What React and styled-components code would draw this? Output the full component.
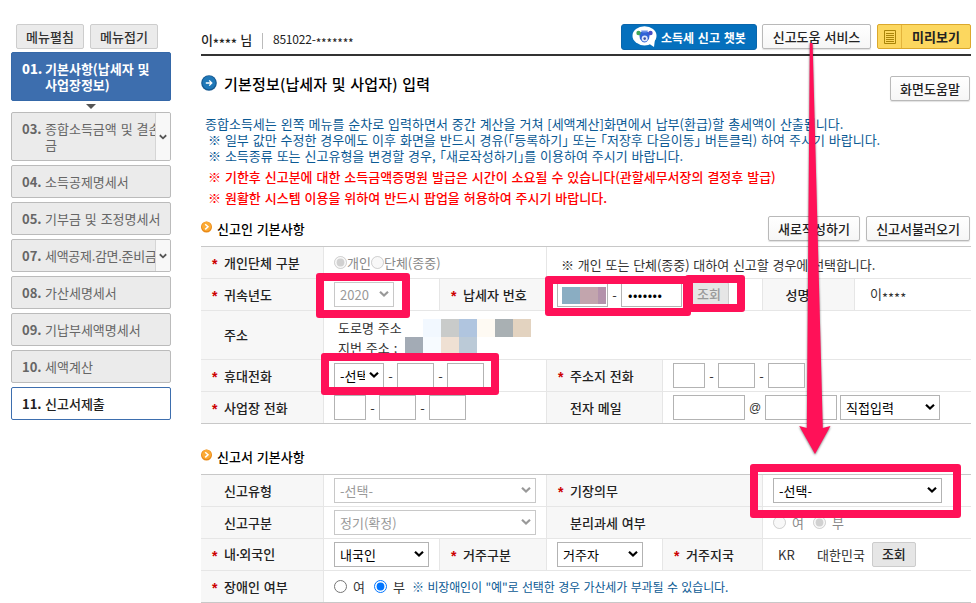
import React, { useState } from "react";
import styled, { createGlobalStyle, css } from "styled-components";

const menus = [
    { no: "03.", lines: ["종합소득금액 및 결손", "금"], toggle: true },
    { no: "04.", lines: ["소득공제명세서"] },
    { no: "05.", lines: ["기부금 및 조정명세서"] },
    { no: "07.", lines: ["세액공제.감면.준비금"], toggle: true, tight: true },
    { no: "08.", lines: ["가산세명세서"] },
    { no: "09.", lines: ["기납부세액명세서"] },
    { no: "10.", lines: ["세액계산"] },
];

const Chevron = ({ className }) => (
    <svg className={className} width="10" height="8" viewBox="0 0 10 8">
        <path d="M1 1.8 L5 5.6 L9 1.8" fill="none" stroke="currentColor" strokeWidth="2.2" />
    </svg>
);

const SelectBox = ({ w, disabled, pad, children }) => (
    <SelectWrap $w={w} $disabled={disabled}>
        <Select disabled={disabled} $pad={pad}>
            <option>{children}</option>
        </Select>
        <SelectArrow />
    </SelectWrap>
);

const Phone = ({ first }) => (
    <>
        {first || <Input $w={32} />}
        <Dash>-</Dash>
        <Input $w={37} />
        <Dash>-</Dash>
        <Input $w={37} />
    </>
);

const Th = ({ w, required, center, children }) => (
    <Label $w={w} $center={center}>
        {!center && <Star>{required ? "*" : ""}</Star>}
        <span>{children}</span>
    </Label>
);

const SectionTitle = ({ children }) => (
    <SectionName>
        <svg width="11" height="12" viewBox="0 0 11 12">
            <circle cx="5.5" cy="6" r="5.5" fill="#e98a17" />
            <circle cx="5.5" cy="5.4" r="4.6" fill="#fbaa35" />
            <path d="M4.2 3.2 L7 5.8 L4.2 8.4" fill="none" stroke="#fff" strokeWidth="1.5" />
        </svg>
        {children}
    </SectionName>
);

const App = () => {
    const [disabledYn, setDisabledYn] = useState("N");

    return (
        <>
            <GlobalStyle />
            <Page>
                <Side>
                    <SideTop>
                        <SideButton>메뉴펼침</SideButton>
                        <SideButton>메뉴접기</SideButton>
                    </SideTop>
                    <MenuItem $active>
                        <MenuNo>01.</MenuNo>
                        <MenuText>
                            <div>기본사항(납세자 및</div>
                            <div>사업장정보)</div>
                        </MenuText>
                    </MenuItem>
                    <Pointer />
                    <MenuList>
                        {menus.map((m) => (
                            <MenuItem key={m.no}>
                                <MenuNo>{m.no}</MenuNo>
                                <MenuText $tight={m.tight}>
                                    {m.lines.map((line) => <div key={line}>{line}</div>)}
                                </MenuText>
                                {m.toggle && <Toggle><Chevron /></Toggle>}
                            </MenuItem>
                        ))}
                        <MenuItem $last>
                            <MenuNo>11.</MenuNo>
                            <MenuText>신고서제출</MenuText>
                        </MenuItem>
                    </MenuList>
                </Side>

                <Main>
                    <Header>
                        <User>
                            <UserName>이<Hidden>****</Hidden> 님</UserName>
                            <UserNo>851022-<Hidden>*******</Hidden></UserNo>
                        </User>
                        <ChatBot>
                            <svg width="26" height="22" viewBox="0 0 26 22">
                                <ellipse cx="12.5" cy="9.8" rx="12" ry="9.6" fill="#fff" />
                                <path d="M16 17 L22 21 L23 13 Z" fill="#fff" />
                                <path d="M7 7 Q12.5 3 18 7 L17 13 Q12.5 20 8 13 Z" fill="#2f62d6" />
                                <path d="M9 4.5 L16 4.5 L14.5 6.5 L10.5 6.5 Z" fill="#6b8fe8" />
                                <circle cx="6.5" cy="7" r="2.2" fill="#3ea557" />
                                <circle cx="18.5" cy="7" r="2.2" fill="#4a4fc4" />
                                <circle cx="12.7" cy="12.6" r="3" fill="#dfe8fb" />
                                <circle cx="12.7" cy="12.6" r="1.3" fill="#3a4fa0" />
                            </svg>
                            소득세 신고 챗봇
                        </ChatBot>
                        <Button $w={109}>신고도움 서비스</Button>
                        <Preview>
                            <PreviewIcon>
                                <svg width="12" height="14" viewBox="0 0 12 14">
                                    <path d="M.5 .5 H11.5 V13.5 H.5 Z M2 3.5 H10 M2 5.5 H10 M2 7.5 H10 M2 9.5 H10 M2 11.5 H10" fill="none" stroke="#a98408" />
                                </svg>
                            </PreviewIcon>
                            미리보기
                        </Preview>
                    </Header>

                    <TitleBar>
                        <svg width="16" height="16" viewBox="0 0 16 16">
                            <circle cx="8" cy="8" r="7.8" fill="#175a92" />
                            <circle cx="8" cy="7.7" r="6.6" fill="#1f78b8" />
                            <path d="M4.8 8 H10.6 M8.2 5.4 L10.8 8 L8.2 10.6" fill="none" stroke="#fff" strokeWidth="1.3" />
                        </svg>
                        <Title>기본정보(납세자 및 사업자) 입력</Title>
                        <Button $w={80}>화면도움말</Button>
                    </TitleBar>

                    <Notes>
                        <p>종합소득세는 왼쪽 메뉴를 순차로 입력하면서 중간 계산을 거쳐 [세액계산]화면에서 납부(환급)할 총세액이 산출됩니다.</p>
                        <Sub>※ 일부 값만 수정한 경우에도 이후 화면을 반드시 경유(｢등록하기｣ 또는 ｢저장후 다음이동｣ 버튼클릭) 하여 주시기 바랍니다.</Sub>
                        <Sub>※ 소득종류 또는 신고유형을 변경할 경우, ｢새로작성하기｣를 이용하여 주시기 바랍니다.</Sub>
                        <Warn>※ 기한후 신고분에 대한 소득금액증명원 발급은 시간이 소요될 수 있습니다(관할세무서장의 결정후 발급)</Warn>
                        <Warn>※ 원활한 시스템 이용을 위하여 반드시 팝업을 허용하여 주시기 바랍니다.</Warn>
                    </Notes>

                    <SectionHead $top={10}>
                        <SectionTitle>신고인 기본사항</SectionTitle>
                        <Button $w={92}>새로작성하기</Button>
                        <Button $w={104}>신고서불러오기</Button>
                    </SectionHead>
                    <Table>
                        <Row>
                            <Th w={123} required>개인단체 구분</Th>
                            <Cell $w={223}>
                                <Muted>
                                    <Radio type="radio" name="kind" disabled defaultChecked />개인
                                    <Radio type="radio" name="kind" disabled />단체(종중)
                                </Muted>
                            </Cell>
                            <Cell>
                                <Guide>※ 개인 또는 단체(종중) 대하여 신고할 경우에 선택합니다.</Guide>
                            </Cell>
                        </Row>
                        <Row>
                            <Th w={123} required>귀속년도</Th>
                            <Cell $w={116}><SelectBox w={60} disabled>2020</SelectBox></Cell>
                            <Th w={107} required>납세자 번호</Th>
                            <Cell $w={216}>
                                <MaskedInput><i /><i /><i /></MaskedInput>
                                <Dash>-</Dash>
                                <Input $w={61} type="password" defaultValue="0000000" />
                                <Lookup $w={40} $muted>조회</Lookup>
                            </Cell>
                            <Th w={92} center>성명</Th>
                            <Cell><Plain $left={5}>이<Hidden>****</Hidden></Plain></Cell>
                        </Row>
                        <Row $h={49}>
                            <Th w={123}>주소</Th>
                            <Cell>
                                <Address>
                                    <AddressLine>
                                        <AddressName $w={85} $top={1}>도로명 주소</AddressName>
                                        <Tile $c="#f2f8ff" /><Tile $c="#c9cbca" /><Tile $c="#b0c5df" />
                                        <Tile $c="#fefaf3" /><Tile $c="#a9b0b3" /><Tile $c="#e3d3c0" />
                                    </AddressLine>
                                    <AddressLine>
                                        <AddressName $w={67} $top={3}>지번 주소 :</AddressName>
                                        <Tile $c="#a3abb5" /><Tile $c="#f7fbff" /><Tile $c="#efe0d3" /><Tile $c="#bbcad7" />
                                    </AddressLine>
                                </Address>
                            </Cell>
                        </Row>
                        <Row>
                            <Th w={123} required>휴대전화</Th>
                            <Cell $w={223}><Phone first={<SelectBox w={50} pad={18}>-선택-</SelectBox>} /></Cell>
                            <Th w={116} required>주소지 전화</Th>
                            <Cell><Phone /></Cell>
                        </Row>
                        <Row>
                            <Th w={123} required>사업장 전화</Th>
                            <Cell $w={223}><Phone /></Cell>
                            <Th w={116}>전자 메일</Th>
                            <Cell>
                                <Input $w={72} />
                                <At>@</At>
                                <Input $w={72} />
                                <Gap />
                                <SelectBox w={100}>직접입력</SelectBox>
                            </Cell>
                        </Row>
                    </Table>

                    <SectionHead $top={20}>
                        <SectionTitle>신고서 기본사항</SectionTitle>
                    </SectionHead>
                    <Table>
                        <Row>
                            <Th w={123}>신고유형</Th>
                            <Cell $w={223}><SelectBox w={202} disabled>-선택-</SelectBox></Cell>
                            <Th w={216} required>기장의무</Th>
                            <Cell><SelectBox w={169}>-선택-</SelectBox></Cell>
                        </Row>
                        <Row>
                            <Th w={123}>신고구분</Th>
                            <Cell $w={223}><SelectBox w={202} disabled>정기(확정)</SelectBox></Cell>
                            <Th w={216}>분리과세 여부</Th>
                            <Cell>
                                <Muted $spaced>
                                    <Radio type="radio" name="split" disabled /><em>여</em>
                                    <Radio type="radio" name="split" disabled defaultChecked /><em>부</em>
                                </Muted>
                            </Cell>
                        </Row>
                        <Row>
                            <Th w={123} required>내<Dot>·</Dot>외국인</Th>
                            <Cell $w={116}><SelectBox w={95}>내국인</SelectBox></Cell>
                            <Th w={107} required>거주구분</Th>
                            <Cell $w={116}><SelectBox w={86}>거주자</SelectBox></Cell>
                            <Th w={100} required>거주지국</Th>
                            <Cell>
                                <Country>KR</Country>
                                <Plain>대한민국</Plain>
                                <Lookup $w={44}>조회</Lookup>
                            </Cell>
                        </Row>
                        <Row>
                            <Th w={123} required>장애인 여부</Th>
                            <Cell>
                                <Choice>
                                    <Radio type="radio" name="dis" checked={disabledYn === "Y"} onChange={() => setDisabledYn("Y")} /><em>여</em>
                                    <Radio type="radio" name="dis" checked={disabledYn === "N"} onChange={() => setDisabledYn("N")} /><em>부</em>
                                </Choice>
                                <Tip>※ 비장애인이 "예"로 선택한 경우 가산세가 부과될 수 있습니다.</Tip>
                            </Cell>
                        </Row>
                    </Table>
                </Main>

                {/* 강조 표시 */}
                <Mark $x={316} $y={273} $w={94} $h={45} />
                <Mark $x={545} $y={276} $w={146} $h={40} />
                <Mark $x={685} $y={275} $w={60} $h={37} />
                <Mark $x={321} $y={353} $w={178} $h={42} />
                <Mark $x={750} $y={464} $w={211} $h={54} />
                <Arrow width="60" height="430" viewBox="785 35 60 430">
                    <path d="M809.8 43 H812.6 L822.8 428 L830.5 426 L815 454 L799.2 426 L806.8 428 Z" fill="#ff1158" />
                </Arrow>
            </Page>
        </>
    );
};

export default App;

const GlobalStyle = createGlobalStyle`
    * {
        box-sizing: border-box;
    }
    body {
        margin: 0;
        background: #fff;
    }
    body, button, input, select {
        font-family: "Noto Sans CJK KR", sans-serif;
        font-size: 13px;
        word-spacing: 1px;
    }
    p {
        margin: 0;
    }
    em {
        font-style: normal;
    }
`

const Page = styled.div`
    position: relative;
    width: 976px;
    height: 603px;
    overflow: hidden;
    display: flex;
    gap: 30px;
    padding: 24px 5px 0 11px;
    color: #333;
    line-height: 16px;
    white-space: nowrap;
`

const Side = styled.div`
    width: 160px;
    flex: none;
`

const SideTop = styled.div`
    display: flex;
    gap: 6px;
    padding-left: 5px;
    margin-bottom: 3px;
`

const SideButton = styled.button`
    width: 68px;
    height: 25px;
    padding: 0;
    border: 1px solid #cdcdcd;
    border-radius: 2px;
    background: #ebebeb;
    color: #333;
    line-height: 22px;
    font-weight: 500;
`

const MenuList = styled.div`
    display: flex;
    flex-direction: column;
    gap: 4px;
`

const MenuItem = styled.div`
    position: relative;
    display: flex;
    overflow: hidden;
    padding: 8px 0 7px 10px;
    border: 1px solid #bbb;
    border-radius: 2px;
    background: #ebebeb;
    color: #666;

    ${(p) => p.$active && css`
        border-color: #3568a8;
        background: #3d6eae;
        color: #fff;
        font-weight: bold;
    `}
    ${(p) => p.$last && css`
        border-color: #3d6eae;
        background: #fff;
        color: #222;
        font-weight: 500;
    `}
`

const MenuNo = styled.b`
    width: 23px;
    flex: none;
`

const MenuText = styled.div`
    flex: 1;
    letter-spacing: ${(p) => (p.$tight ? "-0.3px" : "normal")};
`

const Toggle = styled.div`
    position: absolute;
    top: 0;
    right: 0;
    bottom: 0;
    width: 15px;
    display: flex;
    justify-content: center;
    align-items: center;
    border-left: 1px solid #d5d5d5;
    background: #f8f8f8;
    color: #555;

    svg {
        width: 8px;
    }
`

const Pointer = styled.div`
    width: 0;
    margin: 3px auto 3px;
    border: 5px solid transparent;
    border-top-color: #555;
    border-bottom: 0;
`

const Main = styled.div`
    width: 770px;
    flex: none;
`

const Header = styled.div`
    height: 32px;
    display: flex;
    align-items: flex-start;
    border-bottom: 2px solid #333;
`

const User = styled.div`
    flex: 1;
    display: flex;
    align-items: center;
    height: 33px;
`

const UserName = styled.div`
    color: #222;
    font-weight: 500;
    letter-spacing: -0.3px;
    padding-right: 10px;
`

const UserNo = styled.div`
    line-height: 12px;
    border-left: 1px solid #bbb;
    padding-left: 10px;
    font-size: 12px;
    letter-spacing: -0.2px;
    color: #222;
`

/* 별표가 글자 중간 높이에 오도록 내린다 */
const Hidden = styled.span`
    display: inline-block;
    height: 12px;
    line-height: 12px;
    vertical-align: -4px;
`

const Button = styled.button`
    width: ${(p) => p.$w}px;
    height: 25px;
    padding: 0;
    border: 1px solid #b9b9b9;
    border-radius: 2px;
    background: linear-gradient(#fff, #f6f6f6);
    box-shadow: 0 1px 1px rgba(0, 0, 0, 0.12);
    color: #222;
    font-weight: 500;
    line-height: 23px;
`

const ChatBot = styled.button`
    width: 136px;
    height: 26px;
    margin-right: 5px;
    padding: 0 0 0 10px;
    display: flex;
    align-items: center;
    gap: 3px;
    border: 1px solid #0a66ac;
    border-radius: 3px;
    background: #0570bd;
    color: #fff;
    font-size: 12px;
    font-weight: bold;
    word-spacing: 1px;
`

const Preview = styled.button`
    width: 94px;
    height: 25px;
    margin-left: 6px;
    padding: 0;
    display: flex;
    align-items: center;
    gap: 10px;
    border: 1px solid #dba82c;
    border-radius: 2px;
    background: #fcd75f;
    color: #222;
    font-weight: bold;
`

const PreviewIcon = styled.span`
    width: 24px;
    height: 23px;
    display: flex;
    align-items: center;
    justify-content: center;
    border-right: 1px solid #e3b43c;
`

const TitleBar = styled.div`
    display: flex;
    align-items: flex-start;
    height: 25px;
    margin-top: 20px;
    padding-right: 1px;

    svg {
        margin-top: -1px;
    }
`

const Title = styled.div`
    flex: 1;
    padding-left: 7px;
    font-size: 15px;
    font-weight: 500;
    letter-spacing: 0.17px;
    color: #000;
`

const Notes = styled.div`
    margin-top: 15px;
    padding-left: 4px;
    color: #0b5a94;
`

const Sub = styled.p`
    padding-left: 3px;
`

const Warn = styled.p`
    padding-left: 3px;
    margin-top: 5px;
    color: #f00;
    font-weight: 500;
`

const SectionHead = styled.div`
    display: flex;
    align-items: center;
    gap: 6px;
    height: 25px;
    margin: ${(p) => p.$top}px 1px 5px 0;
`

const SectionName = styled.div`
    flex: 1;
    display: flex;
    gap: 5px;
    color: #000;
    font-weight: 500;
`

const Table = styled.div`
    border-top: 1px solid #c8c8c8;
    border-bottom: 1px solid #c8c8c8;
`

const Row = styled.div`
    display: flex;
    height: ${(p) => p.$h || 32}px;
    border-bottom: 1px solid #e6e6e6;

    &:last-child {
        height: 31px;
        border-bottom: 0;
    }
`

const Label = styled.div`
    width: ${(p) => p.$w}px;
    flex: none;
    display: flex;
    align-items: center;
    justify-content: ${(p) => (p.$center ? "center" : "flex-start")};
    padding-right: ${(p) => (p.$center ? 22 : 0)}px;
    border-right: 1px solid #e6e6e6;
    background: #f7f7f7;
    color: #222;
    font-weight: 500;
`

const Star = styled.span`
    width: 23px;
    height: 14px;
    padding-left: 11px;
    color: #c00;
    font: bold 14px "Liberation Sans", sans-serif;
`

const Dot = styled.span`
    font-family: "Liberation Sans", sans-serif;
    font-weight: bold;
    margin-right: -1px;
`

const Cell = styled.div`
    width: ${(p) => (p.$w ? p.$w + "px" : "auto")};
    flex: ${(p) => (p.$w ? "none" : 1)};
    display: flex;
    align-items: center;
    padding-left: 10px;
    border-right: ${(p) => (p.$w ? "1px solid #e6e6e6" : "0")};
`

const Input = styled.input`
    width: ${(p) => p.$w}px;
    height: 25px;
    padding: 0 6px;
    border: 1px solid #b3b3b3;
    background: #fff;
    letter-spacing: 0.5px;
`

const MaskedInput = styled.div`
    width: 51px;
    height: 25px;
    display: flex;
    padding: 4px 1px 2px 4px;
    border: 1px solid #b3b3b3;

    i {
        width: 18px;
        background: #8aadc2;
    }
    i + i {
        background: #c2a5ad;
    }
    i + i + i {
        width: 8px;
        background: #b392ab;
    }
`

const Dash = styled.span`
    width: 13px;
    text-align: center;
`

const At = styled.span`
    width: 20px;
    text-align: center;
    font-size: 12px;
    font-family: "Liberation Sans", sans-serif;
`

const Gap = styled.span`
    width: 3px;
`

const SelectWrap = styled.div`
    position: relative;
    width: ${(p) => p.$w}px;
    height: 25px;
    color: ${(p) => (p.$disabled ? "#999" : "#000")};
`

const Select = styled.select`
    appearance: none;
    width: 100%;
    height: 25px;
    padding: 0 ${(p) => p.$pad || 14}px 1px 5px;
    border: 1px solid ${(p) => (p.disabled ? "#c8c8c8" : "#b3b3b3")};
    border-radius: 0;
    background: #fff;
    color: inherit;
    opacity: 1;
`

const SelectArrow = styled(Chevron)`
    position: absolute;
    right: 5px;
    top: 8px;
    pointer-events: none;
`

const Radio = styled.input`
    width: 13px;
    height: 13px;
    margin: 0;
`

const Muted = styled.div`
    display: flex;
    align-items: center;
    color: #888;

    em {
        width: ${(p) => (p.$spaced ? "27px" : "auto")};
        padding-left: 6px;
    }
`

const Choice = styled.div`
    display: flex;
    align-items: center;

    em {
        width: 27px;
        padding-left: 6px;
    }
`

const Guide = styled.div`
    padding: 4px 0 0 4px;
    letter-spacing: -0.05px;
`

const Plain = styled.div`
    padding-left: ${(p) => p.$left || 0}px;
`

const Country = styled.div`
    width: 44px;
    padding-left: 5px;
`

const Lookup = styled.button`
    width: ${(p) => p.$w}px;
    height: 25px;
    margin-left: 7px;
    padding: 0 0 2px;
    border: 1px solid #ccc;
    border-radius: 2px;
    background: #e6e6e6;
    color: ${(p) => (p.$muted ? "#999" : "#222")};
    font-weight: 500;
`

const Address = styled.div`
    padding: 2px 0 0 4px;
`

const AddressLine = styled.div`
    display: flex;
    height: 18px;

    & + & {
        height: 17px;
    }
`

const AddressName = styled.div`
    width: ${(p) => p.$w}px;
    padding-top: ${(p) => p.$top}px;
`

const Tile = styled.i`
    width: 18px;
    background: ${(p) => p.$c};
`

const Tip = styled.div`
    margin-left: -2px;
    font-size: 12px;
    letter-spacing: -0.14px;
    color: #0b5a94;
`

const Mark = styled.div`
    position: absolute;
    left: ${(p) => p.$x}px;
    top: ${(p) => p.$y}px;
    width: ${(p) => p.$w}px;
    height: ${(p) => p.$h}px;
    border: 8px solid #ff1158;
    border-radius: 3px;
    pointer-events: none;
`

const Arrow = styled.svg`
    position: absolute;
    left: 785px;
    top: 35px;
    filter: drop-shadow(0 1px 1px rgba(0, 0, 0, 0.5));
    pointer-events: none;
`
